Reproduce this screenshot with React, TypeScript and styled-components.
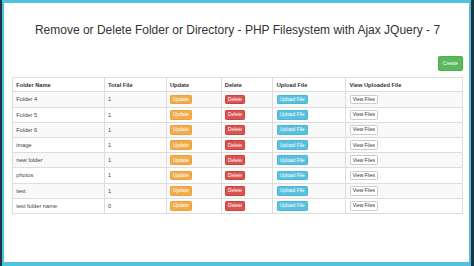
import React from 'react';
import styled, {createGlobalStyle} from 'styled-components';

const GlobalStyle = createGlobalStyle`
  html, body {
    margin: 0;
    padding: 0;
    background: #1c3444;
  }
  * {
    box-sizing: border-box;
  }
`;

const Frame = styled.div`
  width: 474px;
  height: 266px;
  background: #1c3444;
  padding: 0 3px 0 2px;
`;

const Screen = styled.div`
  height: 100%;
  background: #ffffff;
  border-style: solid;
  border-color: #4fc2de;
  border-width: 3px 2px 4px 2px;
  padding: 0 6px 0 8px;
  font-family: "Liberation Sans", Arial, sans-serif;
  color: #333333;
`;

const Title = styled.h1`
  margin: 0;
  padding-top: 17px;
  height: 53px;
  text-align: center;
  font-size: 12px;
  font-weight: 400;
  line-height: 20px;
  white-space: nowrap;
  color: #333333;
`;

const ToolBar = styled.div`
  display: flex;
  justify-content: flex-end;
  align-items: flex-start;
  height: 21px;
`;

type Tone = 'success' | 'warning' | 'danger' | 'info' | 'default';

const tones: Record<Tone, {bg: string; border: string; color: string}> = {
  success: {bg: '#5cb85c', border: '#4cae4c', color: '#ffffff'},
  warning: {bg: '#f0ad4e', border: '#eea236', color: '#ffffff'},
  danger: {bg: '#d9534f', border: '#d43f3a', color: '#ffffff'},
  info: {bg: '#5bc0de', border: '#46b8da', color: '#ffffff'},
  default: {bg: '#ffffff', border: '#cccccc', color: '#333333'}
};

const Button = styled.span<{$tone: Tone; $size?: 'sm' | 'xs'}>`
  display: inline-block;
  background: ${p => tones[p.$tone].bg};
  border: 0.5px solid ${p => tones[p.$tone].border};
  color: ${p => tones[p.$tone].color};
  border-radius: ${p => (p.$size === 'sm' ? '1.5px' : '1.2px')};
  font-size: ${p => (p.$size === 'sm' ? '5px' : '4.9px')};
  line-height: ${p => (p.$size === 'sm' ? '7.5px' : '7px')};
  padding: ${p => (p.$size === 'sm' ? '2.5px 4.2px' : '0.4px 2.1px')};
  vertical-align: middle;
  white-space: nowrap;
`;

const Table = styled.table`
  width: 451px;
  border-collapse: collapse;
  font-size: 5.7px;
  line-height: 8px;
`;

const HeadCell = styled.th<{$w: number}>`
  width: ${p => p.$w}px;
  height: 14.4px;
  text-align: left;
  font-weight: 700;
  padding: 0 3.3px;
  border: 0.6px solid #dddddd;
  border-bottom-width: 1px;
  vertical-align: middle;
  color: #333333;
`;

const Row = styled.tr<{$striped: boolean}>`
  background: ${p => (p.$striped ? '#f9f9f9' : '#ffffff')};
`;

const Cell = styled.td`
  padding: 0 3.3px;
  height: 15.2px;
  border: 0.6px solid #dddddd;
  vertical-align: middle;
  color: #444444;
`;

const columns = [
  {label: 'Folder Name', w: 92},
  {label: 'Total File', w: 62},
  {label: 'Update', w: 55},
  {label: 'Delete', w: 52},
  {label: 'Upload File', w: 73},
  {label: 'View Uploaded File', w: 117}
];

const folders = [
  {name: 'Folder 4', total: 1},
  {name: 'Folder 5', total: 1},
  {name: 'Folder 6', total: 1},
  {name: 'image', total: 1},
  {name: 'new folder', total: 1},
  {name: 'photos', total: 1},
  {name: 'test', total: 1},
  {name: 'test folder name', total: 0}
];

export default function App() {
  return (
    <Frame>
      <GlobalStyle />
      <Screen>
        <Title>Remove or Delete Folder or Directory - PHP Filesystem with Ajax JQuery - 7</Title>
        <ToolBar>
          <Button $tone="success" $size="sm">Create</Button>
        </ToolBar>
        <Table>
          <thead>
            <tr>
              {columns.map(c => (
                <HeadCell key={c.label} $w={c.w}>{c.label}</HeadCell>
              ))}
            </tr>
          </thead>
          <tbody>
            {folders.map((f, i) => (
              <Row key={f.name} $striped={i % 2 === 0}>
                <Cell>{f.name}</Cell>
                <Cell>{f.total}</Cell>
                <Cell><Button $tone="warning">Update</Button></Cell>
                <Cell><Button $tone="danger">Delete</Button></Cell>
                <Cell><Button $tone="info">Upload File</Button></Cell>
                <Cell><Button $tone="default">View Files</Button></Cell>
              </Row>
            ))}
          </tbody>
        </Table>
      </Screen>
    </Frame>
  );
}
